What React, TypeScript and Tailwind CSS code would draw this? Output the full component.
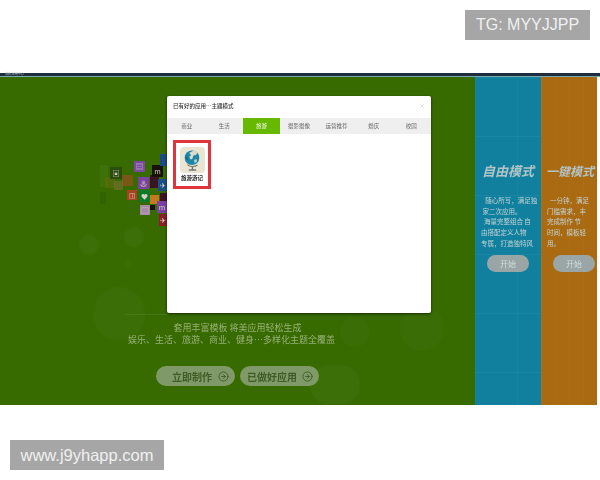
import { CircleArrowRight, X } from "lucide-react";

const tabs = ["商业", "生活", "旅游", "摄影摄像", "运营推荐", "婚庆", "校园"];

// icon cloud left of the dialog, each one sits at its own spot on the green panel
const appTiles = [
  { id: 19, cls: "left-[100px] top-[88px] w-[8px] h-[22px] bg-[#5f8a30] opacity-20", glyph: "" },
  { id: 20, cls: "left-[100px] top-[115px] w-[6px] h-[12px] bg-[#2a5a00] opacity-40", glyph: "" },
  { id: 1, cls: "left-[105px] top-[100px] w-[10px] h-[11px] bg-[#6d6a14] opacity-50", glyph: "" },
  { id: 2, cls: "left-[110px] top-[90px] w-[12px] h-[12px] bg-[#2c4d10]", glyph: "▣" },
  { id: 3, cls: "left-[122px] top-[98px] w-[11px] h-[11px] bg-[#80551a] opacity-90", glyph: "" },
  { id: 4, cls: "left-[114px] top-[104px] w-[9px] h-[9px] bg-[#7d6f38] opacity-60", glyph: "" },
  { id: 5, cls: "left-[134px] top-[84px] w-[11px] h-[11px] bg-[#7a4aa0]", glyph: "▤" },
  { id: 6, cls: "left-[150px] top-[98px] w-[9px] h-[13px] bg-[#3a1420]", glyph: "" },
  { id: 7, cls: "left-[152px] top-[88px] w-[11px] h-[12px] bg-[#17120c]", glyph: "m" },
  { id: 8, cls: "left-[160px] top-[77px] w-[8px] h-[12px] bg-[#1d4a80]", glyph: "" },
  { id: 9, cls: "left-[138px] top-[100px] w-[11px] h-[12px] bg-[#7b40a0]", glyph: "♨" },
  { id: 10, cls: "left-[158px] top-[102px] w-[9px] h-[12px] bg-[#1a4f88]", glyph: "✈" },
  { id: 11, cls: "left-[127px] top-[113px] w-[10px] h-[10px] bg-[#a8421f]", glyph: "◫" },
  { id: 12, cls: "left-[139px] top-[113px] w-[11px] h-[12px] bg-[#0d7a2a]", glyph: "♥" },
  { id: 13, cls: "left-[150px] top-[118px] w-[9px] h-[9px] bg-[#c27a1c]", glyph: "" },
  { id: 14, cls: "left-[160px] top-[116px] w-[7px] h-[9px] bg-[#3a1420]", glyph: "" },
  { id: 15, cls: "left-[140px] top-[128px] w-[10px] h-[10px] bg-[#a78aa8]", glyph: "▢" },
  { id: 16, cls: "left-[150px] top-[128px] w-[5px] h-[5px] bg-[#1a1208]", glyph: "" },
  { id: 17, cls: "left-[157px] top-[124px] w-[10px] h-[12px] bg-[#7b40a0]", glyph: "m" },
  { id: 18, cls: "left-[159px] top-[137px] w-[8px] h-[12px] bg-[#8a1f28]", glyph: "✈" },
];

const bubbles = [
  "left-[79px] top-[158px] w-[20px] h-[20px] bg-[#ffffff08]",
  "left-[124px] top-[150px] w-[20px] h-[20px] bg-[#ffffff08]",
  "left-[124px] top-[183px] w-[8px] h-[8px] bg-[#ffffff06]",
  "left-[93px] top-[210px] w-[52px] h-[54px] bg-[#ffffff06]",
  "left-[310px] top-[288px] w-[50px] h-[40px] bg-[#ffffff08]",
  "left-[340px] top-[240px] w-[30px] h-[30px] bg-[#ffffff05]",
  "left-[400px] top-[230px] w-[44px] h-[44px] bg-[#ffffff05]",
];

function GlobeIcon() {
  return (
    <svg viewBox="0 0 24 26" className="w-[22px] h-[24px]">
      <path d="M7 18c2 2.500 8 3 11 .5" fill="none" stroke="#7c7a66" strokeWidth="1.200" />
      <path d="M12.500 20v3M8.500 24h8" fill="none" stroke="#6f7a78" strokeWidth="1.600" />
      <circle cx="12" cy="10.500" r="8" fill="#1d86a8" />
      <path d="M9 5l5-2.500 4 2-1.500 3-3 .5-1 3.500-2 1-1.500-3 2-1.500z" fill="#d9dccb" />
      <path d="M14 13l3-1 .5 2.500-2.500 2z" fill="#b7d2c8" />
      <path d="M5 9l2 1 .5 3-2-1z" fill="#0f5f7d" />
    </svg>
  );
}

function ModePanel({ title, titleCls, lines, bg, button }: { title: string; titleCls: string; lines: string[]; bg: string; button: string }) {
  return (
    <div className={`flex flex-col overflow-hidden pt-[84px] pl-[6px] ${bg}`}>
      <div className={`h-[20px] whitespace-nowrap leading-[20px] font-bold italic text-[#b4c4c6] blur-[0.3px] ${titleCls}`}>{title}</div>
      <div className="mt-[14px] h-[60px] text-[6.500px] leading-[10.700px] whitespace-pre text-[#c3d2d4] blur-[0.35px]">
        {lines.map((l) => (
          <div key={l}>{l}</div>
        ))}
      </div>
      <div className="ml-[6px] flex h-[17px] w-[42px] items-center justify-center rounded-full bg-[#9aa6a6] text-[8px] text-[#d3dcdc] blur-[0.3px]">
        {button}
      </div>
    </div>
  );
}

export default function App() {
  return (
    <div className="w-[600px] h-[480px] overflow-hidden bg-white font-['Noto_Sans_CJK_SC','Liberation_Sans',sans-serif]">
      <div className="flex h-[73px] justify-end pt-[10px] pr-[10px]">
        <div className="flex h-[30px] w-[125px] items-center justify-center bg-[#a6a6a6] font-['Liberation_Sans',sans-serif] text-[16px] text-[#f0f0f0]">
          TG: MYYJJPP
        </div>
      </div>

      <div className="h-[3px] bg-[#1d2d3d] pl-[5px] text-[3px] leading-[3px] text-[#c9d4d8]">我的 应用中心</div>
      <div className="h-px bg-[#78a8ac]"></div>

      <div className="flex h-[328px] pr-[3px]">
        {/* green intro panel, dialog and decoration lie over it */}
        <div className="relative flex flex-1 flex-col items-center bg-[#376b00] pt-[245px]">
          {bubbles.map((b) => (
            <div key={b} className={`absolute rounded-full blur-[1px] ${b}`}></div>
          ))}
          {appTiles.map((t) => (
            <div key={t.id} className={`absolute flex items-center justify-center overflow-hidden text-[7px] leading-none text-[#d8d0c8] blur-[0.5px] ${t.cls}`}>
              {t.glyph}
            </div>
          ))}
          <div className="absolute left-[125px] top-[237px] h-px w-[42px] bg-[#ffffff14]"></div>

          <div className="relative h-[12px] text-[9px] leading-[12px] text-[#98b078] blur-[0.25px]">套用丰富模板 将美应用轻松生成</div>
          <div className="relative mr-[12px] h-[12px] whitespace-nowrap text-[9px] leading-[12px] text-[#98b078] blur-[0.25px]">
            娱乐、生活、旅游、商业、健身…多样化主题全覆盖
          </div>
          <div className="relative mt-[20px] flex gap-[5px]">
            <div className="flex h-[20px] w-[79px] items-center justify-end gap-[6px] rounded-full bg-[#7f9a68] pr-[6px] text-[10px] font-bold text-[#3f5b26] blur-[0.3px]">
              立即制作
              <CircleArrowRight size={11} strokeWidth={2} />
            </div>
            <div className="flex h-[20px] w-[79px] items-center justify-end gap-[5px] rounded-full bg-[#7f9a68] pr-[6px] text-[10px] font-bold text-[#3f5b26] blur-[0.3px]">
              已做好应用
              <CircleArrowRight size={11} strokeWidth={2} />
            </div>
          </div>

          {/* dialog */}
          <div className="absolute left-[167px] top-[19px] flex h-[217px] w-[264px] flex-col rounded-[2px] bg-white shadow-[0_1px_3px_#00000099]">
            <div className="flex h-[22px] items-center justify-between px-[6px] pb-[2px]">
              <span className="text-[5.500px] font-medium text-[#333] blur-[0.25px]">已有好的应用…主题模式</span>
              <X size={6} className="text-[#c4c4c4]" />
            </div>
            <div className="grid h-[16px] grid-cols-7 bg-[#efefef] px-px">
              {tabs.map((tab, i) => (
                <div
                  key={tab}
                  className={`flex items-center justify-center text-[5.500px] blur-[0.25px] ${i === 2 ? "bg-[#66b800] text-white" : "text-[#666]"}`}
                >
                  {tab}
                </div>
              ))}
            </div>
            <div className="pt-[6px] pl-[6px]">
              <div className="flex h-[49px] w-[38px] flex-col items-center border-[3px] border-[#e0343c] pt-[4px]">
                <div className="flex h-[26px] w-[25px] items-center justify-center rounded-[4px] bg-[#e9e5d2]">
                  <GlobeIcon />
                </div>
                <div className="mt-[1px] whitespace-nowrap text-[5.500px] leading-[8px] font-bold text-[#222] blur-[0.2px]">旅游游记</div>
              </div>
            </div>
          </div>
        </div>

        <ModePanel
          title="自由模式"
          titleCls="text-[13px] ml-[1px]"
          bg="w-[66px] bg-[#10809e] bg-[linear-gradient(#ffffff0a_1px,transparent_1px),linear-gradient(90deg,#ffffff06_1px,transparent_1px)] bg-[size:42px_59px]"
          button="开始"
          lines={["   随心所写，满足独", " 家二次应用。", "  海量完整组合 自", "由搭配定义人物", "专属，打造独特风"]}
        />
        <ModePanel
          title="一键模式"
          titleCls="text-[12px] -ml-[1px]"
          bg="w-[56px] bg-[#a96a12] bg-[linear-gradient(90deg,#ffffff06_1px,transparent_1px)] bg-[size:14px_10px]"
          button="开始"
          lines={["  一分钟，满足", "门槛需求，丰", "完成制作 节", "时间，模板轻", "用。"]}
        />
      </div>

      <div className="pt-[35px] pl-[10px]">
        <div className="flex h-[30px] w-[154px] items-center justify-center bg-[#a6a6a6] font-['Liberation_Sans',sans-serif] text-[16.500px] text-[#f0f0f0]">
          www.j9yhapp.com
        </div>
      </div>
    </div>
  );
}
